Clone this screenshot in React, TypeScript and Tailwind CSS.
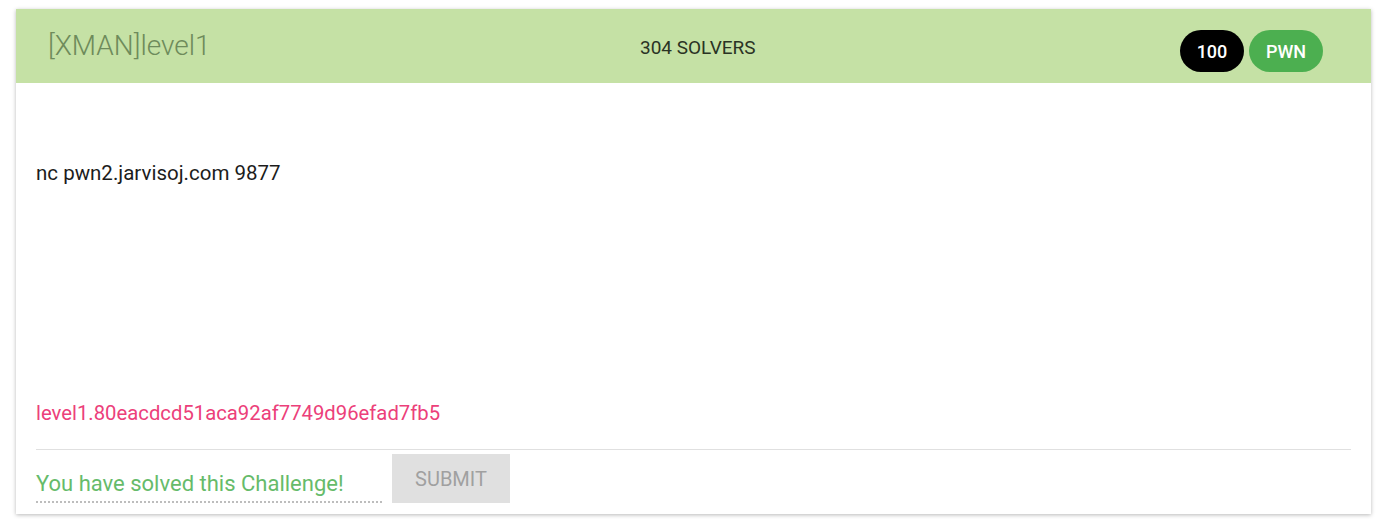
export default function App() {
  return (
    <div className="min-h-[519px] bg-white pt-[9px] pl-4" style={{ fontFamily: 'Roboto, "Liberation Sans", sans-serif' }}>
      <div className="w-[1355px] bg-white shadow-[0_1px_4px_rgba(0,0,0,0.28)]">
        <div className="h-[74px] bg-[#c5e1a5] flex items-center px-8 relative">
          <div className="text-[28px] font-light text-[#6e8b5b] leading-none">[XMAN]level1</div>
          <div className="absolute left-[624px] top-[29px] text-[19px] text-[#2a3324] leading-none">304 SOLVERS</div>
          <div className="ml-auto flex gap-[5px] mt-[10px] mr-4">
            <span className="h-[42px] w-[64px] rounded-full bg-black text-white text-[18px] font-medium flex items-center justify-center">100</span>
            <span className="h-[42px] w-[74px] rounded-full bg-[#4caf50] text-white text-[18px] font-medium flex items-center justify-center">PWN</span>
          </div>
        </div>
        <div className="px-5 pt-[76px] pb-[11px]">
          <div className="text-[20.5px] leading-[28px] text-[#1c1c1c]">nc pwn2.jarvisoj.com 9877</div>
          <div className="mt-[212px] text-[20.3px] leading-[28px] text-[#ec407a]">level1.80eacdcd51aca92af7749d96efad7fb5</div>
          <div className="mt-[22px] border-t border-[#e0e0e0]" />
          <div className="mt-[4px] flex items-end gap-[10px]">
            <div className="w-[346px] border-b-2 border-dotted border-[#bdbdbd] text-[22px] leading-[28px] text-[#66bb6a] pb-[3px]">You have solved this Challenge!</div>
            <button className="h-[49px] w-[118px] bg-[#e0e0e0] text-[#a0a0a0] text-[20px] flex items-center justify-center">SUBMIT</button>
          </div>
        </div>
      </div>
    </div>
  )
}
